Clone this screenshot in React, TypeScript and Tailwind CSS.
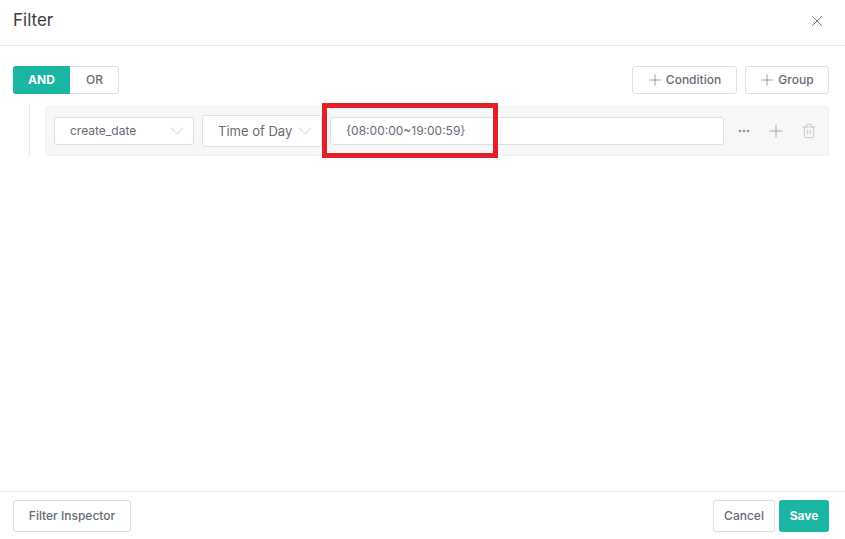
import { ChevronDown, Ellipsis, Plus, Trash2, X } from 'lucide-react';

export default function App() {
  return (
    <div className="flex h-[539px] w-[845px] flex-col bg-white font-['Inter',sans-serif] text-[#4e5969]">
      <header className="flex h-[46px] shrink-0 items-center justify-between border-b border-[#e8e8e8] pb-[3px] pl-[13px] pr-[19px]">
        <h1 className="text-[17px] font-normal text-[#3d3d3d]">Filter</h1>
        <X size={18} strokeWidth={1.1} className="-mt-px text-[#555]" />
      </header>

      <main className="relative flex-1 pl-[13px] pr-4 pt-5">
        <div className="flex items-center justify-between">
          <div className="flex h-7 text-xs">
            <button className="w-[57px] rounded-l-[3px] bg-[#1ab5a3] font-bold text-white">AND</button>
            <button className="w-[49px] rounded-r-[3px] border border-l-0 border-[#dcdfe6] pl-px text-xs font-medium text-[#666c78]">OR</button>
          </div>
          <div className="flex gap-2 text-xs font-medium">
            <button className="flex h-7 w-[105px] items-center justify-center gap-[2px] rounded-[3px] border border-[#dcdfe6] pr-[2px] text-[#666c78]">
              <Plus size={18} strokeWidth={0.9} />
              Condition
            </button>
            <button className="flex h-7 w-[84px] items-center justify-center gap-[2px] rounded-[3px] border border-[#dcdfe6] pr-[2px] text-[#666c78]">
              <Plus size={18} strokeWidth={0.9} />
              Group
            </button>
          </div>
        </div>

        <div className="ml-4 mt-[10px] flex h-[52px] border-l border-[#e8e8e8] pl-[15px]">
          <div className="mt-0.5 flex h-[50px] flex-1 items-center rounded-[3px] border border-[#f0f0f0] bg-[#f7f7f7] pl-2">
            <div className="flex h-7 w-[140px] items-center justify-between rounded-[3px] border border-[#dcdfe6] bg-white pl-[15px] pr-[5px] text-xs text-[#666c78]">
              create_date
              <ChevronDown size={22} strokeWidth={0.7} className="text-[#a8abb2]" />
            </div>
            <div className="ml-2 flex h-8 w-[120px] items-center justify-between rounded-[3px] border border-[#dcdfe6] bg-white pl-[15px] pr-[5px] text-[13px] text-[#666c78]">
              <span className="pt-px">Time of Day</span>
              <ChevronDown size={22} strokeWidth={0.7} className="text-[#a8abb2]" />
            </div>
            <div className="ml-2 flex h-7 w-[394px] items-center rounded-[3px] border border-[#dcdfe6] bg-white pl-[15px] text-xs text-[#666c78]">
              {'{08:00:00~19:00:59}'}
            </div>
            <div className="ml-[13px] flex items-center text-[#8c8f96]">
              <Ellipsis size={14} strokeWidth={2.5} />
              <Plus size={20} strokeWidth={0.9} className="ml-[15px]" />
              <Trash2 size={16} strokeWidth={0.9} className="ml-[15px] text-[#a8abb2]" />
            </div>
          </div>
        </div>

        {/* annotation over the value input */}
        <div className="absolute left-[322px] top-[57px] h-[55px] w-[176px] border-[5px] border-[#e3202a]" />
      </main>

      <footer className="flex h-[48px] shrink-0 items-start justify-between border-t border-[#e8e8e8] pl-[13px] pr-4 pt-2 text-xs font-medium">
        <button className="h-8 w-[118px] rounded-[3px] border border-[#dcdfe6] text-[#666c78]">Filter Inspector</button>
        <div className="flex gap-1">
          <button className="h-8 w-[62px] rounded-[3px] border border-[#dcdfe6] text-[#666c78]">Cancel</button>
          <button className="h-8 w-[50px] rounded-[3px] bg-[#1ab5a3] font-bold text-white">Save</button>
        </div>
      </footer>
    </div>
  );
}
